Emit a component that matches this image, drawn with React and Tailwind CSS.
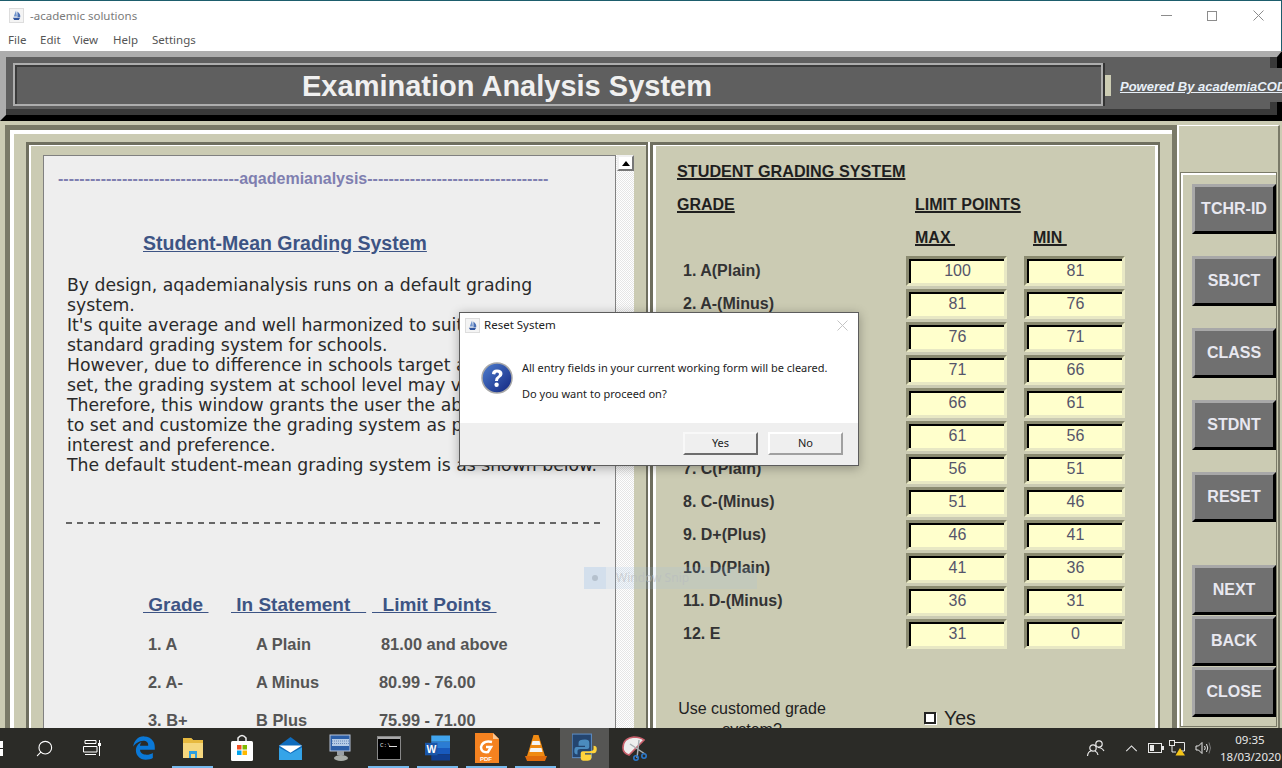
import React from "react";
import { Search } from "lucide-react";
import { FaEdgeLegacy } from "react-icons/fa6";

const SANS = "font-['Liberation_Sans',Arial,sans-serif]";
const VERD = "font-['DejaVu_Sans',sans-serif]";
const UI = "font-['Noto_Sans',sans-serif]";

const grades = [
  ["1. A(Plain)", 100, 81],
  ["2. A-(Minus)", 81, 76],
  ["3. B+(Plus)", 76, 71],
  ["4. B(Plain)", 71, 66],
  ["5. B-(Minus)", 66, 61],
  ["6. C+(Plus)", 61, 56],
  ["7. C(Plain)", 56, 51],
  ["8. C-(Minus)", 51, 46],
  ["9. D+(Plus)", 46, 41],
  ["10. D(Plain)", 41, 36],
  ["11. D-(Minus)", 36, 31],
  ["12. E", 31, 0],
];

const intro = [
  "By design, aqademianalysis runs on a default grading",
  "system.",
  "It's quite average and well harmonized to suit the",
  "standard grading system for schools.",
  "However, due to difference in schools target and mean",
  "set, the grading system at school level may vary.",
  "Therefore, this window grants the user the ability",
  "to set and customize the grading system as per their",
  "interest and preference.",
  "The default student-mean grading system is as shown below.",
];

const sample = [
  ["1. A", "A Plain", "81.00 and above", "ml-[2px]"],
  ["2. A-", "A Minus", "80.99 - 76.00", ""],
  ["3. B+", "B Plus", "75.99 - 71.00", ""],
];

const AppIcon = ({ className }) => (
  <div className={`bg-[#f4f4f4] border border-[#ddd] flex items-center justify-center ${className}`}>
    <svg viewBox="0 0 12 12" className="w-[11px] h-[11px]">
      <path d="M5.5 0.5 L6.5 7 L3 7 Z" fill="#6f93cc" />
      <path d="M7 1.5 Q11 5 10 8 L7 8 Z" fill="#4a70b5" />
      <path d="M2 8.5 H10 L8.5 11 H3.5 Z" fill="#2f559f" />
    </svg>
  </div>
);

const GradeField = ({ value }) => (
  <div className="w-[101px] h-[30px] border-[3px] border-t-[#8a8a70] border-l-[#8a8a70] border-b-[#e8e8c4] border-r-[#e8e8c4]">
    <div className={`h-full border-t-[2px] border-l-[2px] border-t-black border-l-black bg-[#ffffcc] text-center text-[16px] leading-[20px] text-[#55556a] ${SANS}`}>
      {value}
    </div>
  </div>
);

const SideButton = ({ label, className = "" }) => (
  <div
    className={`w-[84px] h-[50px] bg-[#707070] border-[3px] border-t-[#a8a8a8] border-l-[#a8a8a8] border-b-black border-r-black flex items-center justify-center text-[16px] font-bold text-[#e8e8f0] ${SANS} ${className}`}
  >
    {label}
  </div>
);

const DialogButton = ({ label, primary }) => (
  <div
    className={`w-[75px] h-[23px] bg-[#efefef] border-2 flex items-center justify-center text-[11px] text-[#222] ${UI} ${
      primary
        ? "border-t-[#f8f8f8] border-l-[#f8f8f8] border-b-[#6d6d6d] border-r-[#6d6d6d]"
        : "border-t-white border-l-white border-b-[#a0a0a0] border-r-[#a0a0a0]"
    }`}
  >
    {label}
  </div>
);

const TaskSlot = ({ children, underline, active }) => (
  <div className={`relative w-[49px] h-full flex items-center justify-center ${active ? "bg-[#565654]" : ""}`}>
    {children}
    {underline && <div className="absolute bottom-0 left-[4px] right-[4px] h-[2px] bg-[#76b9ed]" />}
  </div>
);

const Folder = () => (
  <svg viewBox="0 0 24 24" className="w-[24px] h-[24px]">
    <path d="M2 2 H10 L12 4 H22 V22 H2 Z" fill="#f5d77e" />
    <path d="M2 2 H10 L12 4 H22 V7 H2 Z" fill="#e7b93f" />
    <path d="M8 22 V15 H16 V22 H14 V18 H10 V22 Z" fill="#2d9fe0" />
  </svg>
);

const Store = () => (
  <svg viewBox="0 0 24 28" className="w-[24px] h-[28px]">
    <path d="M8 8 V4 Q12 -1 16 4 V8" fill="none" stroke="#eee" strokeWidth="1.5" />
    <rect x="1" y="7" width="22" height="20" rx="1.5" fill="#fff" />
    <rect x="7" y="11" width="4.5" height="4.5" fill="#f25022" />
    <rect x="12.5" y="11" width="4.5" height="4.5" fill="#7fba00" />
    <rect x="7" y="16.5" width="4.5" height="4.5" fill="#00a4ef" />
    <rect x="12.5" y="16.5" width="4.5" height="4.5" fill="#ffb900" />
  </svg>
);

const Mail = () => (
  <svg viewBox="0 0 24 24" className="w-[25px] h-[27px]">
    <path d="M1 9 L12 1 L23 9 V23 H1 Z" fill="#0f6cbd" />
    <path d="M1 9 H23 L12 16 Z" fill="#fff" />
    <path d="M1 11 L12 17 L23 11 V23 H1 Z" fill="#35a4e8" />
  </svg>
);

const Remote = () => (
  <svg viewBox="0 0 24 28" className="w-[24px] h-[28px]">
    <rect x="2" y="1" width="20" height="16" fill="#2c5fa8" stroke="#b8c4d8" />
    <rect x="4" y="5" width="17" height="7" fill="#b5cbe6" />
    <path d="M4 7 H21 M4 9.5 H21" stroke="#5579ad" strokeWidth="0.8" strokeDasharray="1 1" />
    <rect x="9" y="17" width="7" height="4" fill="#9aa0a6" />
    <ellipse cx="13" cy="24" rx="7" ry="3" fill="#a8aca8" />
  </svg>
);

const Cmd = () => (
  <svg viewBox="0 0 24 24" className="w-[24px] h-[24px]">
    <rect x="0.5" y="0.5" width="23" height="23" fill="#000" stroke="#888" />
    <rect x="1" y="1" width="22" height="2" fill="#aaa" />
    <text x="3" y="11" fill="#ddd" fontSize="6" fontFamily="Liberation Mono">C:\</text>
    <rect x="12" y="10" width="8" height="1" fill="#ddd" />
  </svg>
);

const Word = () => (
  <svg viewBox="0 0 24 24" className="w-[25px] h-[26px]">
    <rect x="6" y="0" width="18" height="6" fill="#41a5ee" />
    <rect x="6" y="6" width="18" height="6" fill="#2b7cd3" />
    <rect x="6" y="12" width="18" height="6" fill="#185abd" />
    <rect x="6" y="18" width="18" height="6" fill="#103f91" />
    <rect x="0" y="7" width="12" height="12" fill="#1a56a8" />
    <text x="1.5" y="17" fill="#fff" fontSize="10" fontWeight="700" fontFamily="Liberation Sans">W</text>
  </svg>
);

const Foxit = () => (
  <svg viewBox="0 0 24 30" className="w-[24px] h-[30px]">
    <path d="M0 0 H18 L24 6 V30 H0 Z" fill="#f58220" />
    <path d="M18 0 L24 6 H18 Z" fill="#fbc48f" />
    <path d="M17 9 Q8 7 6 14 Q6 20 13 19 L16 14 H11" fill="none" stroke="#fff" strokeWidth="2.5" />
    <text x="5" y="28" fill="#fff" fontSize="6" fontWeight="700" fontFamily="Liberation Sans">PDF</text>
  </svg>
);

const Vlc = () => (
  <svg viewBox="0 0 24 28" className="w-[24px] h-[28px]">
    <path d="M9.5 1 H14.5 L21 22 H3 Z" fill="#f08a12" />
    <path d="M8.5 7 H15.5 L16.5 11 H7.5 Z M6.5 14 H17.5 L18.5 18 H5.5 Z" fill="#f4f4f4" />
    <path d="M1 22 H23 L21 27 H3 Z" fill="#e06b0c" />
  </svg>
);

const PythonIcon = () => (
  <svg viewBox="0 0 24 28" className="w-[26px] h-[30px]">
    <rect x="0" y="1" width="18" height="22" fill="#24456f" stroke="#5b8ac2" />
    <path d="M12 6 Q6 6 6 9 V12 H12 V13 H4 Q2 13 2 17 Q2 20 5 20 V17 Q5 15 8 15 H14 Q16 15 16 13 V9 Q16 6 12 6 Z" fill="#4b8bbe" />
    <path d="M12 26 Q18 26 18 23 V20 H12 V19 H20 Q23 19 23 15 Q23 12 20 12 V15 Q20 17 16 17 H10 Q8 17 8 19 V23 Q8 26 12 26 Z" fill="#ffd43b" />
  </svg>
);

// scissors over a round snip, tilted like the taskbar one
const SnipIcon = () => (
  <svg viewBox="0 0 28 26" className="w-[28px] h-[26px]">
    <path d="M3 13 Q3 3 14 2 Q20 2 24 5 L9 20 Q3 18 3 13 Z" fill="#eeeeee" stroke="#c9606c" strokeWidth="1.6" />
    <path d="M19 5 L17 23 M10 9 L25 19" stroke="#a9b0b4" strokeWidth="1.5" />
    <circle cx="16" cy="23" r="2.2" fill="none" stroke="#2a77c9" strokeWidth="1.6" />
    <circle cx="24" cy="21" r="2.2" fill="none" stroke="#2a77c9" strokeWidth="1.6" />
  </svg>
);

const App = () => {
  return (
    <div className="relative w-[1282px] h-[768px] overflow-hidden bg-[#1d5d6c] flex flex-col">
      {/* Title bar + menu */}
      <div className="mt-[1px] mr-[1px] h-[50px] bg-white flex flex-col shrink-0">
        <div className="h-[29px] flex items-center pl-[9px]">
          <AppIcon className="w-[15px] h-[15px]" />
          <span className={`ml-[6px] text-[11.5px] text-[#7a7a7a] ${UI}`}>-academic solutions</span>
          <div className="ml-auto flex items-center">
            <div className="w-[45px] flex justify-center">
              <div className="w-[11px] h-px bg-[#8c8c8c]" />
            </div>
            <div className="w-[46px] flex justify-center">
              <div className="w-[10px] h-[10px] border border-[#8c8c8c]" />
            </div>
            <div className="w-[46px] flex justify-center">
              <svg viewBox="0 0 11 11" className="w-[11px] h-[11px]">
                <path d="M0.5 0.5 L10.5 10.5 M10.5 0.5 L0.5 10.5" stroke="#8c8c8c" />
              </svg>
            </div>
          </div>
        </div>
        <div className={`flex pl-[8px] text-[11.5px] leading-[20px] text-[#555] ${UI}`}>
          <span className="w-[32px]">File</span>
          <span className="w-[33px]">Edit</span>
          <span className="w-[40px]">View</span>
          <span className="w-[39px]">Help</span>
          <span>Settings</span>
        </div>
      </div>

      {/* Header band */}
      <div className="h-[70px] shrink-0 border-t-[6px] border-l-[6px] border-r-[5px] border-b-[6px] border-t-[#adadad] border-l-[#adadad] border-r-black border-b-black">
        <div className="h-full border-b-[6px] border-r-[7px] border-b-[#3a3a3a] border-r-[#3a3a3a] bg-[#5f5f5f] flex items-start pl-[7px] pt-[6px]">
          <div className="w-[1090px] h-[43px] border-2 border-[#adadad] shadow-[2px_0_0_#333]">
            <div className={`h-full border-t-2 border-l-2 border-[#3a3a3a] pr-[104px] pt-[2px] flex items-center justify-center text-[29px] font-bold text-[#f0f0f0] ${SANS}`}>
              Examination Analysis System
            </div>
          </div>
          <div className="ml-[2px] mt-[12px] w-[6px] h-[21px] bg-[#ccccb3]" />
          <div className="mt-[5px] w-[171px] -mr-[12px] h-[34px] bg-[#5f5f5f] pl-[9px] pt-[2px] overflow-hidden whitespace-nowrap">
            <span className={`italic font-bold underline text-[13px] leading-[34px] text-[#e8f0f8] ${SANS}`}>
              Powered By academiaCODE
            </span>
          </div>
        </div>
      </div>

      {/* Main area */}
      <div className="flex-1 min-h-0 overflow-hidden bg-[#cbcbb3] flex pt-[4px] pl-[5px]">
        <div className="w-[1172px] h-[720px] shrink-0 border-t-[5px] border-l-[5px] border-r-[5px] border-[#7a7a68]">
          <div className="h-full border-t-[4px] border-l-[4px] border-white flex pt-[8px] pl-[12px]">
            {/* Left panel */}
            <div className="w-[624px] h-[690px] border-r-2 border-white">
              <div className="h-full border-t-[3px] border-l-[3px] border-r-[2px] border-[#6f6f5f]">
                <div className="h-full border-t-[1px] border-l-[2px] border-white pt-[9px] pl-[12px] flex">
                  <div className="w-[573px] h-[660px] bg-[#eeeeee] border-t border-l border-r border-[#808080] overflow-hidden">
                    <div className={`pt-[14px] pl-[14px] text-[16px] leading-[18px] font-bold text-[#7f7fb0] whitespace-nowrap ${SANS}`}>
                      ----------------------------------aqademianalysis----------------------------------
                    </div>
                    <div className={`mt-[43px] pl-[99px] text-[19.5px] leading-[24px] font-bold underline text-[#3d5484] ${SANS}`}>
                      Student-Mean Grading System
                    </div>
                    <div className={`mt-[20px] pl-[23px] text-[17.25px] leading-[20px] text-[#2a2a2a] whitespace-nowrap ${VERD}`}>
                      {intro.map((line) => (
                        <div key={line}>{line}</div>
                      ))}
                    </div>
                    <div className="mt-[47px] ml-[22px] w-[534px] h-[2px] bg-[repeating-linear-gradient(90deg,#666_0_6px,transparent_6px_11px)]" />
                    <div className={`mt-[69px] pl-[99px] flex text-[19px] leading-[24px] font-bold text-[#3d5484] whitespace-pre ${SANS}`}>
                      <span className="w-[88px] underline"> Grade </span>
                      <span className="w-[141px] underline"> In Statement   </span>
                      <span className="underline">  Limit Points </span>
                    </div>
                    <div className={`mt-[8px] text-[16.4px] font-bold text-[#555] ${SANS}`}>
                      {sample.map(([grade, statement, limit, shift]) => (
                        <div key={grade} className="h-[38px] flex items-center pl-[104px]">
                          <span className="w-[108px]">{grade}</span>
                          <span className="w-[123px]">{statement}</span>
                          <span className={shift}>{limit}</span>
                        </div>
                      ))}
                    </div>
                  </div>
                  {/* Scrollbar */}
                  <div className="w-[18px] h-[660px] bg-[repeating-conic-gradient(#e6e6e6_0_25%,#ffffff_0_50%)] bg-[length:2px_2px] pl-px">
                    <div className="h-[16px] bg-white border-2 border-t-[#f0f0f0] border-l-[#f0f0f0] border-b-[#777] border-r-[#777] flex items-center justify-center">
                      <div className="w-0 h-0 border-l-[4px] border-r-[4px] border-b-[5px] border-l-transparent border-r-transparent border-b-black" />
                    </div>
                  </div>
                </div>
              </div>
            </div>

            {/* Grading panel */}
            <div className="w-[510px] h-[690px] border-t-[3px] border-l-[3px] border-r-[2px] border-[#6f6f5f]">
              <div className="h-full border-t-[1px] border-l-[3px] border-r-[3px] border-white pl-[21px] pt-[13px] relative">
                <div className={`w-[229px] overflow-hidden whitespace-nowrap text-[16.2px] leading-[24px] font-bold underline decoration-2 text-[#1f1f1f] ${SANS}`}>
                  STUDENT GRADING SYSTEM
                </div>
                <div className={`mt-[10px] flex text-[16px] leading-[24px] font-bold underline decoration-2 text-[#1f1f1f] ${SANS}`}>
                  <span className="w-[238px]">GRADE</span>
                  <span>LIMIT POINTS</span>
                </div>
                <div className={`mt-[9px] flex pl-[238px] text-[16px] leading-[24px] font-bold underline decoration-2 text-[#1f1f1f] whitespace-pre ${SANS}`}>
                  <span className="w-[118px]">MAX </span>
                  <span>MIN </span>
                </div>
                <div className="mt-[4px] flex flex-col">
                  {grades.map(([label, max, min]) => (
                    <div key={label} className="h-[33px] flex items-center">
                      <span className={`w-[229px] pl-[6px] text-[16px] font-bold text-[#333] ${SANS}`}>{label}</span>
                      <GradeField value={max} />
                      <div className="ml-[17px]">
                        <GradeField value={min} />
                      </div>
                    </div>
                  ))}
                </div>
                <div className="mt-[48px] flex">
                  <div className={`w-[150px] text-center text-[16px] leading-[21px] text-[#222] ${SANS}`}>
                    Use customed grade system?
                  </div>
                  <div className="ml-[97px] mt-[14px] w-[12px] h-[12px] bg-white border-2 border-[#222] shadow-[1px_1px_0_#fff]" />
                  <span className={`ml-[8px] mt-[9px] text-[19.5px] leading-[22px] text-[#222] ${SANS}`}>Yes</span>
                </div>
              </div>
            </div>
          </div>
        </div>

        {/* Side column */}
        <div className="w-[103px] h-[720px] shrink-0 border-t border-l-2 border-r-2 border-t-white border-l-white border-r-[#7a7a68] pt-[46px] pl-[1px]">
          <div className="w-[97px] h-[555px] border border-[#7a7a68]">
            <div className="h-full border-t-2 border-l-2 border-white pl-[9px] pt-[9px] flex flex-col">
              <SideButton label="TCHR-ID" />
              <SideButton label="SBJCT" className="mt-[22px]" />
              <SideButton label="CLASS" className="mt-[22px]" />
              <SideButton label="STDNT" className="mt-[22px]" />
              <SideButton label="RESET" className="mt-[22px]" />
              <SideButton label="NEXT" className="mt-[43px]" />
              <SideButton label="BACK" className="mt-px" />
              <SideButton label="CLOSE" className="mt-px" />
            </div>
          </div>
        </div>
      </div>

      {/* Taskbar */}
      <div className="h-[40px] shrink-0 bg-[#2b2b27] flex items-center text-white">
        <div className="w-[20px] h-full flex items-center">
          <div className="grid grid-cols-1 gap-[1px]">
            <div className="w-[3px] h-[7px] bg-white" />
            <div className="w-[3px] h-[7px] bg-white" />
          </div>
        </div>
        <div className="w-[48px] flex justify-center">
          <Search className="w-[19px] h-[19px] -scale-x-100" strokeWidth={1.4} />
        </div>
        <div className="w-[47px] flex justify-center">
          <svg viewBox="0 0 18 18" className="w-[18px] h-[18px]" fill="none" stroke="#fff">
            <path d="M2 1.5 H13 V4.5 H2 Z M0.5 7.5 H14 V13 H0.5 Z M2 15.5 H13 M16.5 1 V17" />
            <rect x="15" y="4" width="3" height="3" fill="#fff" stroke="none" />
          </svg>
        </div>
        <div className="w-[4px]" />
        <TaskSlot>
          <FaEdgeLegacy className="w-[24px] h-[26px] text-[#0a78d7]" />
        </TaskSlot>
        <TaskSlot underline>
          <Folder />
        </TaskSlot>
        <TaskSlot>
          <Store />
        </TaskSlot>
        <TaskSlot>
          <Mail />
        </TaskSlot>
        <TaskSlot>
          <Remote />
        </TaskSlot>
        <TaskSlot underline>
          <Cmd />
        </TaskSlot>
        <TaskSlot underline>
          <Word />
        </TaskSlot>
        <TaskSlot underline>
          <Foxit />
        </TaskSlot>
        <TaskSlot underline>
          <Vlc />
        </TaskSlot>
        <TaskSlot active>
          <PythonIcon />
        </TaskSlot>
        <TaskSlot>
          <SnipIcon />
        </TaskSlot>

        {/* Tray */}
        <div className="ml-auto flex items-center h-full">
          <svg viewBox="0 0 20 18" className="w-[20px] h-[18px]" fill="none" stroke="#e8e8e8" strokeWidth="1.2">
            <circle cx="13" cy="5" r="3.2" />
            <circle cx="7" cy="9" r="3.2" />
            <path d="M1.5 17 Q2 12.5 5 12 M9 12 Q11.5 13 12 16 M12 8.5 Q16 8.5 18 12" />
          </svg>
          <svg viewBox="0 0 14 8" className="ml-[19px] w-[13px] h-[7px]" fill="none" stroke="#e8e8e8" strokeWidth="1.2">
            <path d="M1 7 L7 1 L13 7" />
          </svg>
          <svg viewBox="0 0 16 10" className="ml-[10px] w-[16px] h-[10px]" fill="none" stroke="#e8e8e8">
            <rect x="0.5" y="0.5" width="13" height="9" />
            <rect x="2" y="2" width="4" height="6" fill="#e8e8e8" stroke="none" />
            <rect x="14" y="3" width="2" height="4" fill="#e8e8e8" stroke="none" />
          </svg>
          <svg viewBox="0 0 17 16" className="ml-[5px] w-[17px] h-[16px]" fill="none" stroke="#e8e8e8">
            <rect x="0.5" y="0.5" width="5" height="5" />
            <path d="M5.5 2.5 H15.5 V11 H11 M3 5.5 V12 H7" />
            <path d="M11 8 L16 15.5 H6.5 Z" fill="#f5c518" stroke="none" />
          </svg>
          <svg viewBox="0 0 16 14" className="ml-[9px] w-[16px] h-[14px]" fill="none" stroke="#e8e8e8">
            <path d="M1 5 H3.5 L7 1.5 V12.5 L3.5 9 H1 Z M9.5 5 Q11 7 9.5 9 M11.5 3 Q14 7 11.5 11" />
            <path d="M14 1.5 Q17 7 14 12.5" stroke="#777" />
          </svg>
          <div className={`ml-[9px] w-[60px] text-center text-[11.5px] leading-[17px] text-[#e8e8e8] ${UI}`}>
            <div>09:35</div>
            <div>18/03/2020</div>
          </div>
          <div className="w-[2px]" />
        </div>
      </div>

      {/* Faded window-snip toast, sits over the page */}
      <div className="absolute left-[584px] top-[567px] w-[173px] h-[22px] bg-[#9cc4ea]/15 flex items-center">
        <div className="w-[22px] h-full bg-[#9cc4ea]/20 flex items-center justify-center">
          <div className="w-[6px] h-[6px] rounded-full bg-[#a8b4c0]/70" />
        </div>
        <span className={`ml-[10px] text-[12px] text-[#b8bcc0]/60 ${UI}`}>Window Snip</span>
      </div>

      {/* Reset dialog */}
      <div className="absolute left-[459px] top-[312px] w-[400px] h-[154px] bg-white border border-[#5c5c5c] shadow-[0_2px_10px_rgba(0,0,0,0.3)] flex flex-col">
        <div className="h-[23px] flex items-center pl-[5px] pt-[1px]">
          <AppIcon className="w-[15px] h-[15px]" />
          <span className={`ml-[4px] text-[11.5px] text-[#222] ${UI}`}>Reset System</span>
          <svg viewBox="0 0 11 11" className="ml-auto mr-[10px] w-[11px] h-[11px]">
            <path d="M0.5 0.5 L10.5 10.5 M10.5 0.5 L0.5 10.5" stroke="#c4c4c4" />
          </svg>
        </div>
        <div className="flex-1 flex pl-[21px] pt-[25px]">
          <svg viewBox="0 0 32 32" className="w-[32px] h-[32px] mt-[1px]">
            <defs>
              <linearGradient id="qblue" x1="0" y1="0" x2="1" y2="1">
                <stop offset="0" stopColor="#4f7fd0" />
                <stop offset="1" stopColor="#12257f" />
              </linearGradient>
            </defs>
            <circle cx="16" cy="16" r="15" fill="url(#qblue)" stroke="#a8a8a8" strokeWidth="1.5" />
            <path d="M11 12 Q11 7.5 16 7.5 Q21.5 7.5 21.5 12 Q21.5 14.5 18.5 16 Q17 17 17 19 H14 Q14 15.5 16.5 14.2 Q18 13.2 18 12 Q18 10.5 16 10.5 Q14.5 10.5 14.2 12.5 Z" fill="#fff" />
            <circle cx="15.6" cy="22.8" r="2.2" fill="#fff" />
          </svg>
          <div className={`ml-[9px] text-[11px] text-[#222] ${UI}`}>
            <div className="leading-[16px] mt-[-1px]">All entry fields in your current working form will be cleared.</div>
            <div className="leading-[16px] mt-[10px]">Do you want to proceed on?</div>
          </div>
        </div>
        <div className="h-[42px] bg-[#efefef] flex items-start justify-end gap-[10px] pt-[9px] pr-[15px]">
          <DialogButton label="Yes" primary />
          <DialogButton label="No" />
        </div>
      </div>
    </div>
  );
};

export default App;
